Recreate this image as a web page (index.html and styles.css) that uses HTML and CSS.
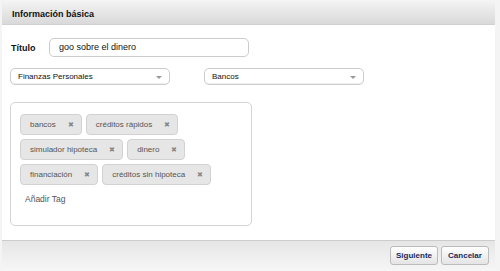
FILE: index.html
```html
<!DOCTYPE html>
<html>
<head>
<meta charset="utf-8">
<link rel="stylesheet" href="styles.css">
</head>
<body>
<div class="dialog">
  <div class="header">Información básica</div>
  <div class="content">
    <div class="row-title">
      <label class="lbl">Título</label>
      <div class="input">goo sobre el dinero</div>
    </div>
    <div class="row-selects">
      <div class="select"><span>Finanzas Personales</span><span class="caret"></span></div>
      <div class="select"><span>Bancos</span><span class="caret"></span></div>
    </div>
    <div class="tagbox">
      <div class="tags">
        <span class="tag">bancos<i class="x">✖</i></span>
        <span class="tag">créditos rápidos<i class="x">✖</i></span>
        <span class="tag">simulador hipoteca<i class="x">✖</i></span>
        <span class="tag">dinero<i class="x">✖</i></span>
        <span class="tag">financiación<i class="x">✖</i></span>
        <span class="tag">créditos sin hipoteca<i class="x">✖</i></span>
      </div>
      <div class="add">Añadir Tag</div>
    </div>
  </div>
  <div class="footer">
    <button class="btn">Siguiente</button>
    <button class="btn">Cancelar</button>
  </div>
</div>
</body>
</html>
```
FILE: styles.css
```css
html, body { margin: 0; padding: 0; }
body {
  background: #f4f4f4;
  font-family: "Liberation Sans", Arial, sans-serif;
  font-size: 9px;
  color: #222;
  width: 500px;
  height: 271px;
  overflow: hidden;
}
.dialog {
  margin: 2px 0 0 2px;
  width: 493px;
  height: 269px;
  background: #fff;
  display: flex;
  flex-direction: column;
}
.header {
  height: 23px;
  box-sizing: border-box;
  padding: 7px 0 0 10px;
  font-weight: bold;
  font-size: 9px;
  color: #111;
  background: linear-gradient(#f2f2f2, #d9d9d9);
  border-bottom: 1px solid #d0d0d0;
}
.content {
  flex: 1;
  padding: 13px 0 0 8px;
}
.row-title {
  display: flex;
  align-items: center;
  height: 19px;
}
.lbl {
  font-weight: bold;
  width: 38px;
  padding-left: 1px;
  color: #111;
}
.input {
  width: 200px;
  height: 19px;
  box-sizing: border-box;
  border: 1px solid #ccc;
  border-radius: 5px;
  padding: 3px 0 0 9px;
  color: #111;
}
.row-selects {
  display: flex;
  gap: 34px;
  margin-top: 11px;
}
.select {
  width: 160px;
  height: 17px;
  box-sizing: border-box;
  border: 1px solid #ccc;
  border-radius: 5px;
  padding: 2px 7px 0 7px;
  display: flex;
  justify-content: space-between;
  align-items: center;
  color: #111;
  font-size: 8px;
  box-shadow: inset 0 -1px 0 #eee;
}
.select span:first-child { margin-top: -2px; }
.caret {
  width: 0; height: 0;
  border-left: 3px solid transparent;
  border-right: 3px solid transparent;
  border-top: 3px solid #999;
  margin-top: -1px;
}
.tagbox {
  margin-top: 17px;
  width: 242px;
  height: 124px;
  box-sizing: border-box;
  border: 1px solid #d4d4d4;
  border-radius: 5px;
  padding: 11px 8px 0 9px;
}
.tags {
  display: flex;
  flex-wrap: wrap;
  gap: 4px 4px;
}
.tag {
  display: inline-flex;
  align-items: center;
  height: 21px;
  box-sizing: border-box;
  background: #e6e6e6;
  border: 1px solid #d2d2d2;
  border-radius: 4px;
  padding: 0 7px 0 9px;
  color: #555;
  font-size: 8px;
}
.x {
  font-style: normal;
  color: #888;
  font-size: 7px;
  margin-left: 12px;
}
.add {
  margin: 9px 0 0 5px;
  color: #555;
  font-size: 8.5px;
}
.footer {
  height: 31px;
  box-sizing: border-box;
  border-top: 1px solid #ccc;
  background: linear-gradient(#e6e6e6, #f6f6f6);
  display: flex;
  justify-content: flex-end;
  align-items: flex-start;
  gap: 3px;
  padding: 5px 6px 0 0;
}
.btn {
  font-family: "Liberation Sans", Arial, sans-serif;
  font-size: 8px;
  font-weight: bold;
  color: #1a2a5a;
  height: 19px;
  width: 48px;
  padding: 0;
  border: 1px solid #bbb;
  border-radius: 3px;
  background: linear-gradient(#fff, #e4e4e4);
}
```
